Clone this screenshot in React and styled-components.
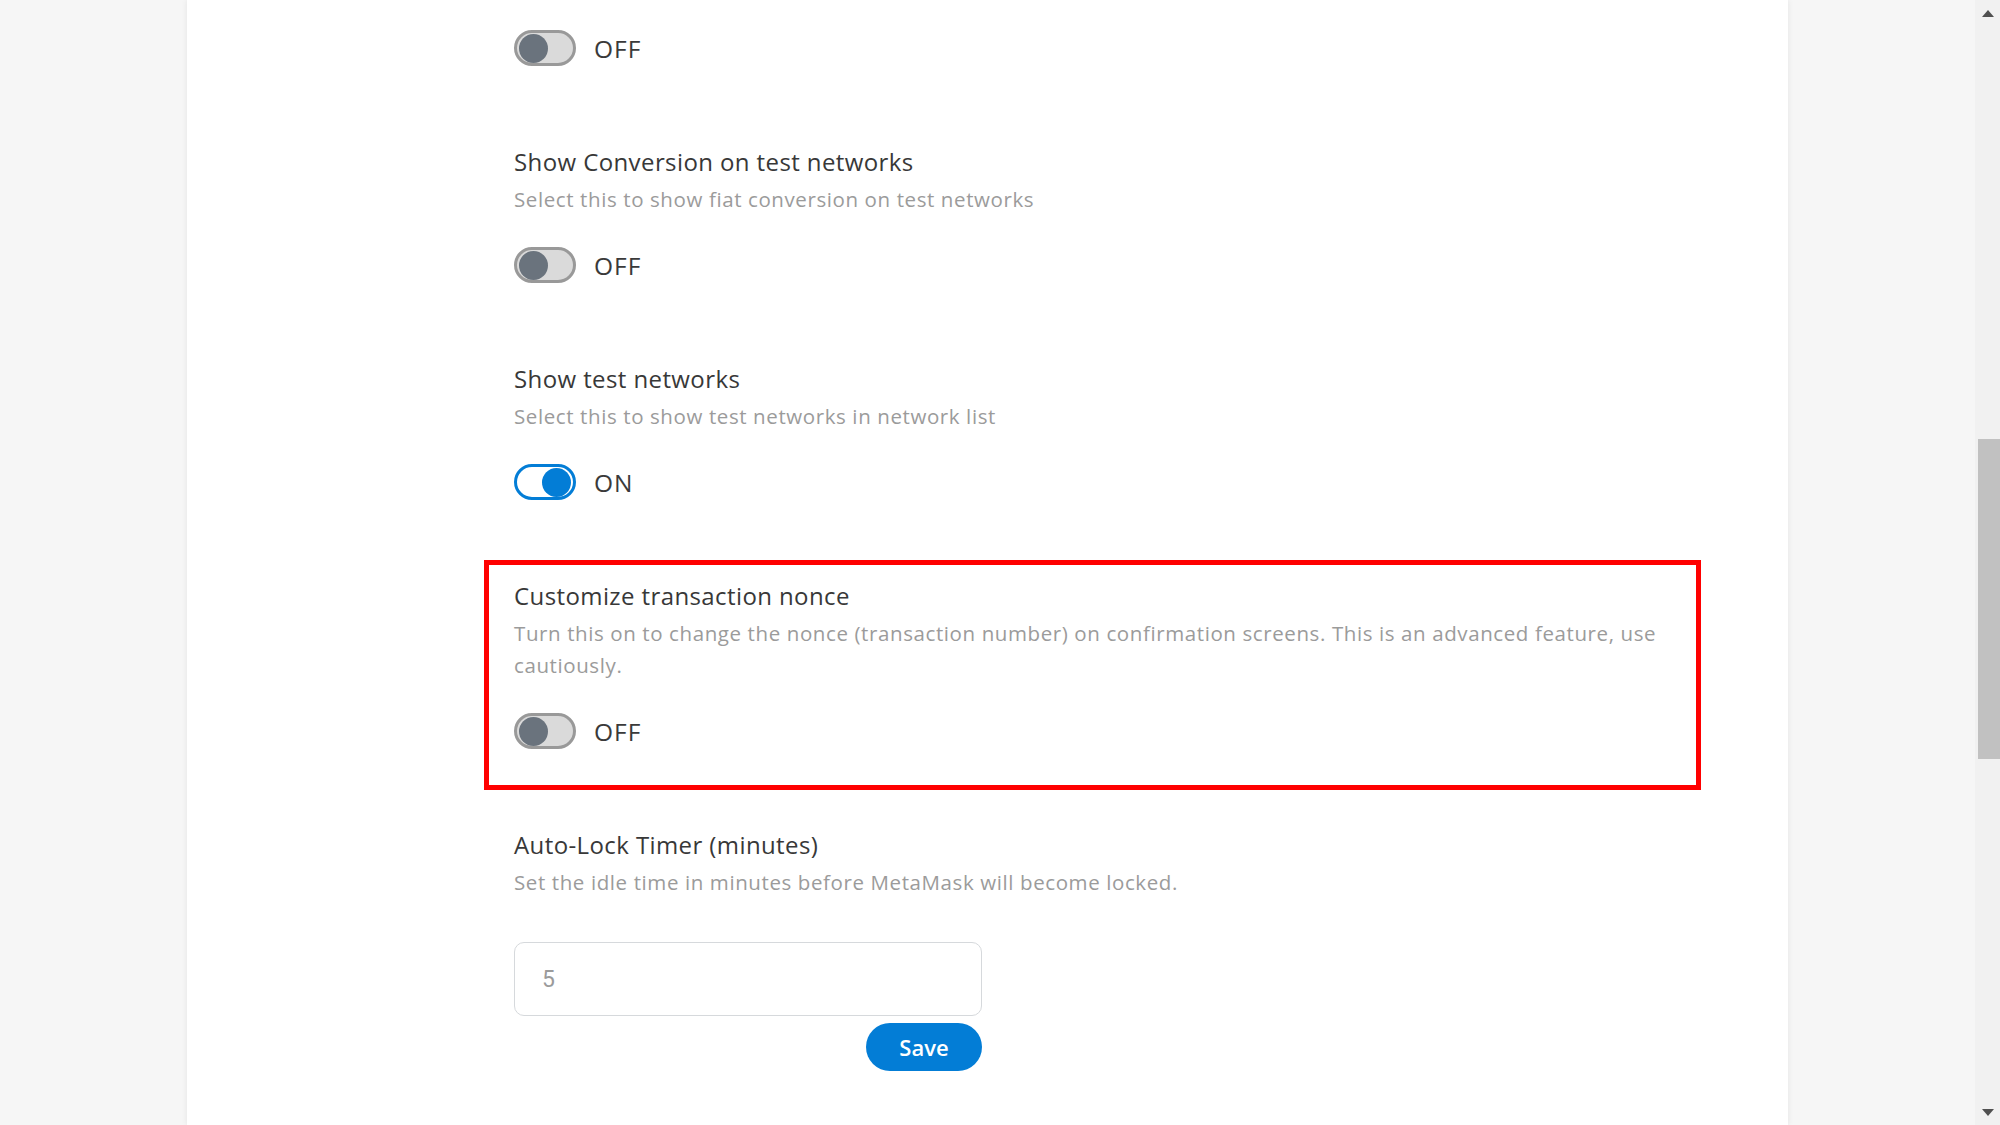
import React from "react";
import styled, { createGlobalStyle } from "styled-components";

const GlobalStyle = createGlobalStyle`
  html, body {
    margin: 0;
    padding: 0;
    background: #f6f6f6;
  }
  body {
    font-family: "Open Sans", Lato, sans-serif;
  }
`;

// first entry is scrolled past: only its toggle is still in view
const settings = [
  { id: "hex", on: false },
  {
    id: "conversion",
    title: "Show Conversion on test networks",
    desc: "Select this to show fiat conversion on test networks",
    on: false,
  },
  {
    id: "testnets",
    title: "Show test networks",
    desc: "Select this to show test networks in network list",
    on: true,
  },
  {
    id: "nonce",
    title: "Customize transaction nonce",
    desc: "Turn this on to change the nonce (transaction number) on confirmation screens. This is an advanced feature, use cautiously.",
    on: false,
    highlight: true,
  },
];

const Toggle = ({ on }) => (
  <ToggleRow>
    <Track $on={on}>
      <Knob $on={on} />
    </Track>
    <ToggleLabel>{on ? "ON" : "OFF"}</ToggleLabel>
  </ToggleRow>
);

const App = () => {
  return (
    <>
      <GlobalStyle />
      <Screen>
        <Page>
          <Panel>
            <Content>
              {settings.map((s) => (
                <SettingItem key={s.id} $highlight={s.highlight}>
                  {s.title && <Title>{s.title}</Title>}
                  {s.desc && <Desc>{s.desc}</Desc>}
                  <Toggle on={s.on} />
                </SettingItem>
              ))}
              <SettingItem>
                <Title>Auto-Lock Timer (minutes)</Title>
                <Desc>Set the idle time in minutes before MetaMask will become locked.</Desc>
                <TimerForm>
                  <TimerInput type="number" defaultValue="5" readOnly />
                  <SaveButton>Save</SaveButton>
                </TimerForm>
              </SettingItem>
            </Content>
          </Panel>
        </Page>
        <Scrollbar>
          <Arrow $dir="up" />
          <Thumb />
          <Arrow $dir="down" />
        </Scrollbar>
      </Screen>
    </>
  );
};

const Screen = styled.div`
  display: flex;
  width: 2000px;
  height: 1125px;
  overflow: hidden;
`;

const Page = styled.div`
  flex: 1;
  background: #f6f6f6;
  padding-left: 187px;
  box-sizing: border-box;
`;

const Panel = styled.div`
  width: 1601px;
  height: 100%;
  background: #fff;
  box-shadow: 0 0 6px rgba(0, 0, 0, 0.08);
  overflow: hidden;
`;

const Content = styled.div`
  display: flex;
  flex-direction: column;
  width: 1217px;
  margin-left: 297px;
  margin-top: -23px;
`;

const SettingItem = styled.div`
  display: flex;
  flex-direction: column;
  padding: 21px 30px 41px;
  margin-bottom: 19px;
  box-shadow: ${(p) => (p.$highlight ? "inset 0 0 0 5px #ff0000" : "none")};
`;

const Title = styled.div`
  font-size: 24px;
  line-height: 30px;
  letter-spacing: 0.4px;
  color: #383838;
`;

const Desc = styled.div`
  margin-top: 6px;
  font-size: 20.5px;
  line-height: 32px;
  letter-spacing: 0.6px;
  color: #9b9b9b;
`;

const ToggleRow = styled.div`
  display: flex;
  align-items: center;
  gap: 18px;
  margin-top: 32px;
  height: 36px;
`;

const Track = styled.div`
  width: 62px;
  height: 36px;
  box-sizing: border-box;
  border-radius: 18px;
  border: 3px solid ${(p) => (p.$on ? "#037dd6" : "#999")};
  background: ${(p) => (p.$on ? "#fff" : "#dadada")};
  display: flex;
  align-items: center;
  justify-content: ${(p) => (p.$on ? "flex-end" : "flex-start")};
  padding: 0 2px;
`;

const Knob = styled.div`
  width: 29px;
  height: 29px;
  border-radius: 50%;
  background: ${(p) => (p.$on ? "#037dd6" : "#6a737d")};
`;

const ToggleLabel = styled.span`
  font-size: 24.5px;
  letter-spacing: 1px;
  color: #3a3a3a;
`;

const TimerForm = styled.div`
  display: flex;
  flex-direction: column;
  align-items: flex-end;
  width: 468px;
  margin-top: 44px;
  gap: 7px;
`;

const TimerInput = styled.input`
  width: 100%;
  height: 74px;
  box-sizing: border-box;
  border: 1.5px solid #d6d9dc;
  border-radius: 10px;
  padding: 0 0 0 27px;
  font-family: Roboto, sans-serif;
  font-size: 23px;
  color: #9b9b9b;
  outline: none;
  -moz-appearance: textfield;
  &::-webkit-inner-spin-button,
  &::-webkit-outer-spin-button {
    -webkit-appearance: none;
    margin: 0;
  }
`;

const SaveButton = styled.button`
  width: 116px;
  height: 48px;
  border: none;
  border-radius: 24px;
  background: #037dd6;
  color: #fff;
  font-family: "Open Sans", sans-serif;
  font-size: 22px;
  font-weight: 600;
`;

const Scrollbar = styled.div`
  width: 25px;
  background: #f1f1f1;
  display: flex;
  flex-direction: column;
  align-items: center;
`;

const Arrow = styled.div`
  width: 0;
  height: 0;
  border-left: 6px solid transparent;
  border-right: 6px solid transparent;
  ${(p) =>
    p.$dir === "up"
      ? "border-bottom: 7px solid #505050; margin-top: 10px;"
      : "border-top: 7px solid #505050; margin-top: auto; margin-bottom: 9px;"}
`;

const Thumb = styled.div`
  width: 22px;
  height: 320px;
  margin-top: 422px;
  margin-left: 2px;
  background: #c1c1c1;
`;

export default App;
